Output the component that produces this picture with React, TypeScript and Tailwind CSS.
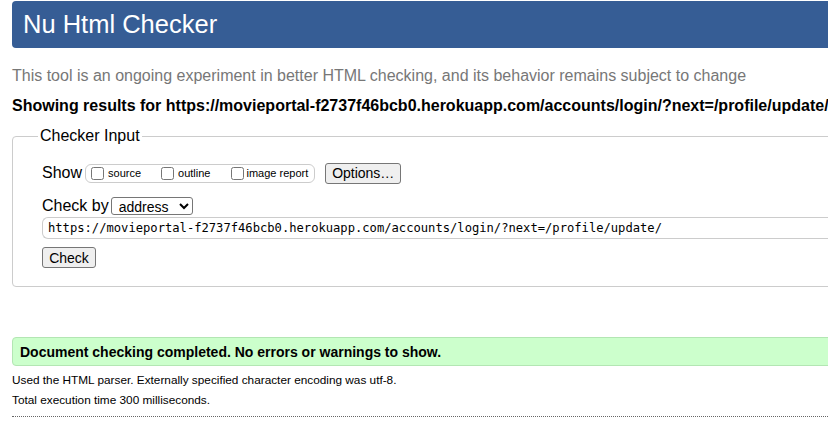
export default function App() {
  const url = 'https://movieportal-f2737f46bcb0.herokuapp.com/accounts/login/?next=/profile/update/'

  return (
    <div className="w-[828px] h-[423px] overflow-hidden bg-white font-['Liberation_Sans',Arial,sans-serif] text-black">
      <div className="w-[900px] pl-3 pt-px">
        <h1 className="h-[47px] flex items-center pl-[11px] rounded-l bg-[#365d95] text-white text-[25.5px] leading-none">
          Nu Html Checker
        </h1>

        <p className="mt-[18px] text-base leading-5 text-[#777]">
          This tool is an ongoing experiment in better HTML checking, and its behavior remains subject to change
        </p>
        <p className="mt-[10px] text-base leading-5 font-bold whitespace-nowrap">
          Showing results for {url}
        </p>

        <fieldset className="mt-[10px] h-[161px] border border-[#ccc] rounded-l p-0">
          <legend className="ml-[25px] px-[2px] text-base leading-5">Checker Input</legend>

          <div className="pl-[29px] pt-[17px]">
            <div className="flex items-center h-5">
              <span className="text-base mr-[3px]">Show</span>
              <div className="flex items-center h-[19px] border border-[#ccc] rounded-md pl-[5px] pr-[6px] text-[11px]">
                <label className="flex items-center">
                  <input type="checkbox" className="w-[13px] h-[13px] mr-[4px]" />
                  source
                </label>
                <label className="flex items-center ml-[20px]">
                  <input type="checkbox" className="w-[13px] h-[13px] mr-[4px]" />
                  outline
                </label>
                <label className="flex items-center ml-[21px]">
                  <input type="checkbox" className="w-[13px] h-[13px] mr-[2px]" />
                  image report
                </label>
              </div>
              <button className="ml-[10px] h-[21px] w-[76px] border border-[#767676] rounded-[3px] bg-[#efefef] text-sm leading-none">
                Options…
              </button>
            </div>

            <div className="flex items-center mt-[13px] h-5">
              <span className="text-base mr-[2px]">Check by</span>
              <select className="h-[18px] w-[82px] border border-[#767676] rounded-[3px] text-sm leading-none pl-[3px] appearance-auto">
                <option>address</option>
              </select>
            </div>

            <div className="mt-[1px] h-[22px] border border-[#ccc] border-r-0 rounded-l-md flex items-center pl-[5px] font-['DejaVu_Sans_Mono',monospace] text-[12.15px] text-black">
              {url}
            </div>

            <button className="mt-2 h-[21px] w-[54px] border border-[#767676] rounded-[3px] bg-[#efefef] text-sm leading-none">
              Check
            </button>
          </div>
        </fieldset>

        <div className="mt-[50px] h-[29px] flex items-center pl-[7px] bg-[#ccffcc] border border-[#b3e6b3] rounded-l text-sm font-bold">
          Document checking completed. No errors or warnings to show.
        </div>

        <p className="mt-[7px] text-[11.8px] leading-[14px]">
          Used the HTML parser. Externally specified character encoding was utf-8.
        </p>
        <p className="mt-[6px] text-[11.8px] leading-[14px]">Total execution time 300 milliseconds.</p>
        <div className="mt-[9px] border-t border-dotted border-[#666]" />
      </div>
    </div>
  )
}
